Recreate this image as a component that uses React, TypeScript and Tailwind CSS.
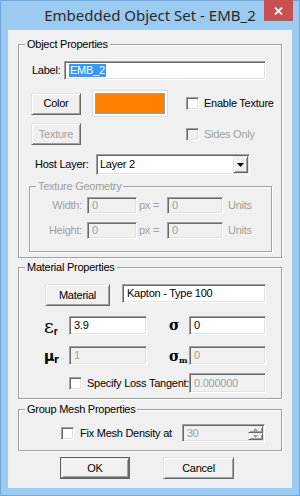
import React from "react";

const sunken =
  "border border-[#a0a0a0] border-b-white border-r-white shadow-[inset_1px_1px_0_#696969,inset_-1px_-1px_0_#e3e3e3]";
const raised =
  "border border-[#e3e3e3] border-b-[#696969] border-r-[#696969] shadow-[inset_1px_1px_0_#fff,inset_-1px_-1px_0_#a0a0a0]";
const etched = "border border-[#a0a0a0] shadow-[1px_1px_0_#fff,inset_1px_1px_0_#fff]";

const Button = ({ label, w, disabled, def }: { label: string; w: string; disabled?: boolean; def?: boolean }) => (
  <div className={`${w} h-[22px] shrink-0 ${def ? "border border-[#646464]" : ""}`}>
    <div
      className={`flex h-full w-full items-center justify-center bg-[#f0f0f0] ${raised} ${
        disabled ? "text-[#a0a0a0]" : "text-black"
      }`}
    >
      {label}
    </div>
  </div>
);

const Field = ({ value, w, h = "h-[19px]", disabled }: { value: string; w: string; h?: string; disabled?: boolean }) => (
  <div
    className={`${w} ${h} shrink-0 flex items-center pl-[4px] ${sunken} ${
      disabled ? "bg-[#f0f0f0] text-[#a0a0a0]" : "bg-white text-black"
    }`}
  >
    {value}
  </div>
);

const Check = ({ disabled }: { disabled?: boolean }) => (
  <div className={`h-[13px] w-[13px] shrink-0 ${sunken} ${disabled ? "bg-[#f0f0f0]" : "bg-white"}`} />
);

const Group = ({ title, h, className = "", children }: { title: string; h: string; className?: string; children: React.ReactNode }) => (
  <div className={`relative ${h} ${etched} ${className}`}>
    <span className="absolute -top-[7px] left-[6px] bg-[#f0f0f0] px-[2px] leading-[13px] whitespace-nowrap">{title}</span>
    {children}
  </div>
);

export default function App() {
  return (
    <div className="flex h-[496px] w-[300px] flex-col bg-[#9ccaf0] text-[11px] leading-[13px] text-black [font-family:'Liberation_Sans',Arial,sans-serif] border border-[#6fa6dc]">
      <div className="relative flex h-[29px] shrink-0 items-center justify-center">
        <span className="text-[15px] text-[#2a2a2a] [font-family:'Noto_Sans',sans-serif]">Embedded Object Set - EMB_2</span>
        <div className="absolute right-[6px] -top-px flex h-[21px] w-[29px] items-center justify-center bg-[#c75050]">
          <svg width="9" height="8" viewBox="0 0 9 8">
            <path d="M1 0.5 L8 7.5 M8 0.5 L1 7.5" stroke="#fff" strokeWidth="1.8" />
          </svg>
        </div>
      </div>

      <div className="mx-[7px] flex h-[458px] flex-col border border-[#e8f1fa] bg-[#f0f0f0] px-[9px] pt-[13px] whitespace-nowrap tracking-[-0.25px]">
        <Group title="Object Properties" h="h-[214px]">
          <div className="flex items-center pl-[13px] pt-[16px]">
            <span className="w-[32px]">Label:</span>
            <div className={`flex h-[19px] w-[202px] items-center bg-white pl-[4px] ${sunken}`}>
              <span className="bg-[#3399ff] px-[1px] text-white">EMB_2</span>
            </div>
          </div>

          <div className="mt-[10px] flex items-center pl-[12px]">
            <Button label="Color" w="w-[50px]" />
            <div className="ml-[11px] h-[27px] w-[76px] border border-[#dcdcdc] bg-white p-[2px]">
              <div className="h-full w-full border border-[#a0a0a0] bg-[#ff8000]" />
            </div>
            <div className="ml-[18px] flex items-center gap-[5px]">
              <Check />
              <span>Enable Texture</span>
            </div>
          </div>

          <div className="mt-[6px] flex items-center pl-[12px]">
            <Button label="Texture" w="w-[50px]" disabled />
            <div className="ml-[105px] flex items-center gap-[5px] text-[#a0a0a0]">
              <Check disabled />
              <span>Sides Only</span>
            </div>
          </div>

          <div className="mt-[9px] flex items-center pl-[16px]">
            <span className="w-[61px]">Host Layer:</span>
            <div className={`flex h-[21px] w-[154px] items-center justify-between bg-white pl-[3px] ${sunken}`}>
              <span>Layer 2</span>
              <div className={`mr-[1px] flex h-[17px] w-[15px] items-center justify-center bg-[#f0f0f0] ${raised}`}>
                <svg width="7" height="4" viewBox="0 0 7 4">
                  <path d="M0 0 H7 L3.5 4 Z" fill="#000" />
                </svg>
              </div>
            </div>
          </div>

          <Group title="Texture Geometry" h="h-[66px]" className="ml-[10px] mt-[11px] w-[243px] text-[#a0a0a0]">
            <div className="flex items-center pt-[10px]">
              <span className="w-[57px] pr-[5px] text-right">Width:</span>
              <Field value="0" w="w-[50px]" h="h-[17px]" disabled />
              <span className="w-[30px] pl-[2px]">px =</span>
              <Field value="0" w="w-[56px]" h="h-[17px]" disabled />
              <span className="ml-[5px]">Units</span>
            </div>
            <div className="mt-[8px] flex items-center">
              <span className="w-[57px] pr-[5px] text-right">Height:</span>
              <Field value="0" w="w-[50px]" h="h-[17px]" disabled />
              <span className="w-[30px] pl-[2px]">px =</span>
              <Field value="0" w="w-[56px]" h="h-[17px]" disabled />
              <span className="ml-[5px]">Units</span>
            </div>
          </Group>
        </Group>

        <Group title="Material Properties" h="h-[132px]" className="mt-[9px]">
          <div className="flex items-start pl-[26px] pt-[16px]">
            <Button label="Material" w="w-[65px]" />
            <div className="ml-[12px]">
              <Field value="Kapton - Type 100" w="w-[144px]" />
            </div>
          </div>

          <div className="mt-[10px] flex items-center pl-[25px]">
            <span className="w-[25px] text-[19px] leading-[18px] tracking-normal [font-family:'DejaVu_Serif',serif]">
              ɛ<sub className="text-[10px] font-bold [font-family:'Liberation_Sans',sans-serif]">r</sub>
            </span>
            <Field value="3.9" w="w-[78px]" />
            <span className="ml-[22px] w-[20px] font-bold text-[14px] [font-family:'DejaVu_Serif',serif]">σ</span>
            <Field value="0" w="w-[77px]" />
          </div>

          <div className="mt-[11px] flex items-center pl-[25px]">
            <span className="w-[25px] font-bold text-[14px] leading-[14px] [font-family:'DejaVu_Sans',sans-serif]">
              μ<sub className="text-[10px]">r</sub>
            </span>
            <Field value="1" w="w-[78px]" disabled />
            <span className="ml-[22px] w-[20px] font-bold text-[14px] leading-[14px] [font-family:'DejaVu_Serif',serif]">
              σ<sub className="text-[8px]">m</sub>
            </span>
            <Field value="0" w="w-[77px]" disabled />
          </div>

          <div className="mt-[8px] flex items-center pl-[50px]">
            <Check />
            <span className="ml-[5px] w-[102px]">Specify Loss Tangent:</span>
            <Field value="0.000000" w="w-[77px]" h="h-[20px]" disabled />
          </div>
        </Group>

        <Group title="Group Mesh Properties" h="h-[42px]" className="mt-[10px]">
          <div className="flex items-center pl-[42px] pt-[14px]">
            <Check />
            <span className="ml-[6px] w-[102px]">Fix Mesh Density at</span>
            <div className={`flex h-[18px] w-[83px] items-center justify-between bg-[#f0f0f0] pl-[4px] text-[#a0a0a0] ${sunken}`}>
              <span>30</span>
              <div className="mr-[1px] flex h-[14px] w-[15px] flex-col">
                <div className={`flex h-[7px] items-center justify-center bg-[#f0f0f0] ${raised}`}>
                  <svg width="5" height="3" viewBox="0 0 5 3"><path d="M0 3 H5 L2.5 0 Z" fill="#a0a0a0" /></svg>
                </div>
                <div className={`flex h-[7px] items-center justify-center bg-[#f0f0f0] ${raised}`}>
                  <svg width="5" height="3" viewBox="0 0 5 3"><path d="M0 0 H5 L2.5 3 Z" fill="#a0a0a0" /></svg>
                </div>
              </div>
            </div>
          </div>
        </Group>

        <div className="mt-[6px] flex pl-[42px] gap-[33px]">
          <Button label="OK" w="w-[70px]" def />
          <Button label="Cancel" w="w-[71px]" />
        </div>
      </div>
    </div>
  );
}
